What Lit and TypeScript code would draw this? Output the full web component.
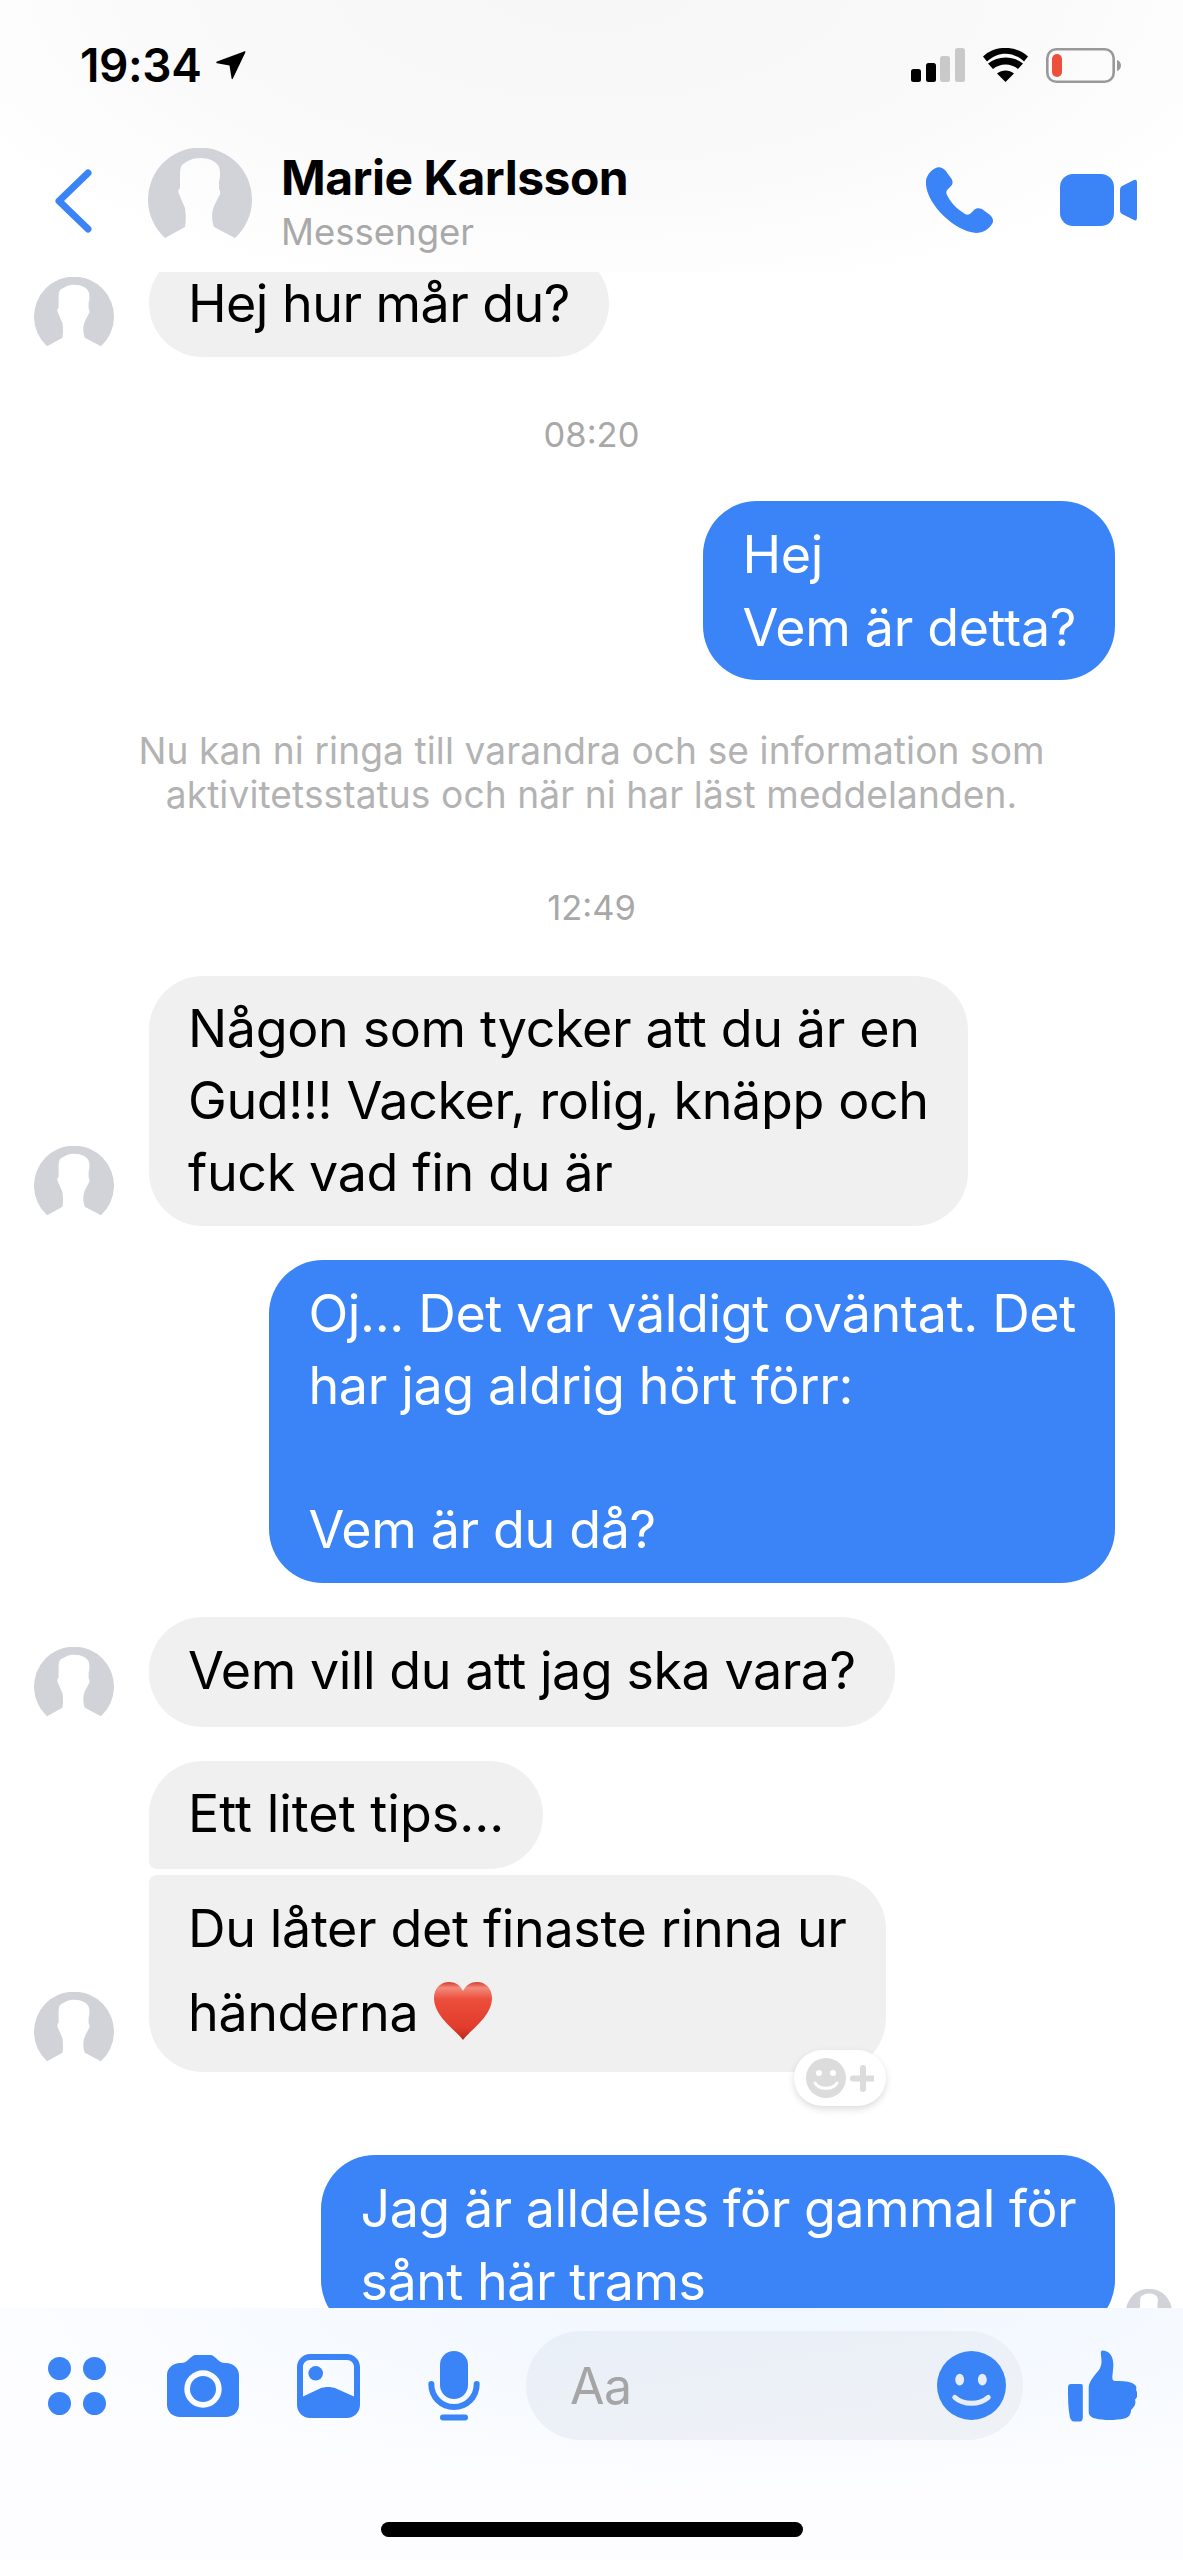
import { LitElement, html, css } from "lit";
import { customElement } from "lit/decorators.js";

const avatar = (cls: string) => html`<svg class=${cls} viewBox="0 0 104 104" aria-hidden="true">
  <path fill="#d2d3d8" d="M17 90A52 52 0 1 1 87 90L66 79C64 73 63 66 66 58L71 48C73 46 72 42 71 41L71 33C72 31 72 28 72 24 72 14 62 10 52 10 44 10 40 13 35 16 32 18 32 24 32 30L32 40C30 42 30 44 31 46L37 60C38 67 38 73 37 79z"/>
</svg>`;

@customElement("app-root")
export class AppRoot extends LitElement {
  static styles = css`
    :host { display: block; width: 1183px; height: 2560px; overflow: hidden; background: #fff; font-family: Inter, "Noto Sans", "Liberation Sans", sans-serif; color: #000; }
    .page { display: flex; flex-direction: column; height: 2560px; }
    .top { height: 272px; flex: none; background: radial-gradient(ellipse 720px 330px at 50% -20px, #f7f7f7 0, #f9f9f9 55%, #fff 100%); display: flex; flex-direction: column; }
    .status { height: 128px; flex: none; padding: 2px 62px 0 80px; display: flex; align-items: center; justify-content: space-between; box-sizing: border-box; }
    .clock { display: flex; align-items: center; gap: 14px; font-size: 46px; font-weight: 600; letter-spacing: -0.4px; }
    .sys { display: flex; align-items: center; gap: 18px; }
    .head { display: flex; align-items: flex-start; padding: 20px 46px 0 55px; }
    .back { width: 37px; height: 64px; margin-top: 21px; flex: none; }
    .hava { width: 104px; height: 104px; margin-left: 56px; flex: none; }
    .names { margin: 4px 0 0 29px; flex: 1; }
    .name { font-size: 48px; font-weight: 700; line-height: 52px; letter-spacing: -0.5px; }
    .sub { font-size: 36.5px; line-height: 44px; color: #a9a9a9; margin-top: 6px; }
    .calls { display: flex; align-items: center; gap: 67px; margin-top: 19px; }
    .chat { flex: 1; min-height: 0; overflow: hidden; display: flex; flex-direction: column; }
    .list { margin-top: -22px; display: flex; flex-direction: column; flex: none; }
    .row { display: flex; align-items: flex-end; position: relative; flex: none; }
    .row.l { padding-left: 34px; gap: 35px; }
    .row.r { justify-content: flex-end; padding-right: 68px; }
    .ava { width: 80px; height: 80px; flex: none; }
    .spacer { width: 80px; flex: none; }
    .b { box-sizing: border-box; padding: 17.5px 39px; border-radius: 54px; font-size: 52px; line-height: 72px; letter-spacing: -0.35px; white-space: pre; position: relative; }
    .in { background: #f0f0f0; color: #000; }
    .out { background: #3b84f8; color: #fff; }
    .b.two { line-height: 73px; padding: 16.500px 39px; }
    .b.three { padding: 17px 39px; }
    .b.vem { padding: 18px 39px 20px; letter-spacing: -0.45px; }
    .b.ett { padding: 17px 39px 19px; letter-spacing: 0; }
    .b.hej { letter-spacing: -0.55px; }
    .b.jag { letter-spacing: -0.5px; }
    .b.tall { line-height: 84px; padding: 12px 39px 17px; }
    .cont1 { border-bottom-left-radius: 8px; }
    .cont2 { border-top-left-radius: 8px; }
    .heart { display: inline-block; width: 60px; height: 60px; vertical-align: -10px; }
    .react { position: absolute; right: 0; bottom: -34px; width: 92px; height: 56px; background: #fff; border-radius: 28px; box-shadow: 0 3px 7px rgba(0,0,0,.14); display: flex; align-items: center; justify-content: center; }
    .time { text-align: center; font-size: 34.5px; line-height: 38px; color: #a8a8a8; }
    .note { text-align: center; font-size: 37.1px; line-height: 44px; color: #b3b3b3; white-space: pre; letter-spacing: .1px; }
    .g6 { margin-top: 6px; } .g34 { margin-top: 34px; } .g47 { margin-top: 47px; } .g49 { margin-top: 49px; }
    .g59 { margin-top: 59px; } .g72 { margin-top: 72px; } .g83 { margin-top: 83px; }
    .g48b { margin-top: 48px; }
    .peek { position: absolute; right: 11px; top: 134px; width: 46px; height: 46px; }
    .composer { height: 252px; flex: none; box-sizing: border-box; padding-top: 23px; background: radial-gradient(ellipse 850px 190px at 790px 0, #f1f7ff 0, #f6faff 55%, #fdfdff 100%); display: flex; flex-direction: column; }
    .tools { height: 109px; flex: none; display: flex; align-items: center; padding-left: 48px; }
    .cam { margin-left: 61px; } .img { margin-left: 58px; } .mic { margin-left: 68px; }
    .pill { margin-left: 46px; width: 497px; height: 109px; flex: none; border-radius: 55px; background: linear-gradient(170deg, #e9eff8, #eff2f6); display: flex; align-items: center; justify-content: space-between; box-sizing: border-box; padding: 0 17px 0 44px; }
    .aa { font-size: 50px; color: #a5a5a5; letter-spacing: -0.5px; }
    .thumb { margin-left: 45px; }
    .homebar { align-self: center; margin-top: 82px; width: 422px; height: 15px; border-radius: 8px; background: #000; flex: none; }
    .ic { display: block; flex: none; }
  `;

  render() {
    return html`<div class="page">
      <div class="top">
        <div class="status">
          <div class="clock">19:34
            <svg class="ic" width="31" height="30" viewBox="0 0 31 30"><path d="M29 1.500 2 11.500c-1 .500-1 1.500 0 1.800L14.500 15.500 16.500 28c.200 1.500 1 1.500 1.500.300L30.300 2.500C30.700 1.500 30 1 29 1.500z" fill="#000"/></svg>
          </div>
          <div class="sys">
            <svg class="ic" width="54" height="34" viewBox="0 0 54 34">
              <rect x="0" y="21" width="10" height="13" rx="2.500" fill="#000"/>
              <rect x="15" y="15" width="10" height="19" rx="2.500" fill="#000"/>
              <rect x="29" y="8" width="10" height="26" rx="2.500" fill="#c9c9c9"/>
              <rect x="44" y="0" width="10" height="34" rx="2.500" fill="#c9c9c9"/>
            </svg>
            <svg class="ic" width="45" height="34" viewBox="0 0 45 34">
              <path d="M22.500 34 14 25.500c5-4 12-4 17 0z" fill="#000"/>
              <path d="M10 21 5 15.500c10-8 25-8 35 0L35 21C28 15 17 15 10 21z" fill="#000"/>
              <path d="M4 13.500 0 8.500C12-3 33-3 45 8.500L41 13.500C30 3 15 3 4 13.500z" fill="#000"/>
            </svg>
            <svg class="ic" width="75" height="35" viewBox="0 0 75 35">
              <rect x="1.300" y="1.300" width="66.400" height="32.400" rx="9" fill="none" stroke="#999" stroke-width="2.600"/>
              <rect x="6" y="6" width="10" height="23" rx="5" fill="#ee4f3c"/>
              <path d="M71 12c2.500.800 4 3 4 5.500s-1.500 4.700-4 5.500z" fill="#999"/>
            </svg>
          </div>
        </div>
        <div class="head">
          <svg class="back" viewBox="0 0 37 64"><path d="M33 4 4 32l29 28" fill="none" stroke="#3b84f8" stroke-width="7" stroke-linecap="round" stroke-linejoin="round"/></svg>
          ${avatar("hava")}
          <div class="names"><div class="name">Marie Karlsson</div><div class="sub">Messenger</div></div>
          <div class="calls">
            <svg class="ic" width="67" height="66" viewBox="0 0 67 66"><path fill="#3b84f8" d="M8 2c4-3 8-2 11 1l6 8c2 3 2 6 0 8l-3 3c-2 2-2 4-1 6 4 8 10 14 18 19 2 1 4 1 6-1l3-3c2-2 5-2 8-1l8 6c3 3 4 6 2 9-3 5-9 9-16 9C28 64 2 38 0 18-1 11 3 5 8 2z"/></svg>
            <svg class="ic" width="77" height="52" viewBox="0 0 77 52"><rect x="0" y="0" width="54" height="52" rx="13" fill="#3b84f8"/><path fill="#3b84f8" d="M60 16c0-2 .500-3 2-4l12-6c2-1 3 0 3 3v34c0 3-1 4-3 3l-12-6c-1.500-1-2-2-2-4z"/></svg>
          </div>
        </div>
      </div>
      <div class="chat">
        <div class="list">
          <div class="row l">${avatar("ava")}<div class="b in hej">Hej hur mår du?</div></div>
          <div class="time g59">08:20</div>
          <div class="row r g47"><div class="b out two">${"Hej\nVem är detta?"}</div></div>
          <div class="note g49">${"Nu kan ni ringa till varandra och se information som\naktivitetsstatus och när ni har läst meddelanden."}</div>
          <div class="time g72">12:49</div>
          <div class="row l g49">${avatar("ava")}<div class="b in three">${"Någon som tycker att du är en\nGud!!! Vacker, rolig, knäpp och\nfuck vad fin du är"}</div></div>
          <div class="row r g34"><div class="b out">${"Oj... Det var väldigt oväntat. Det\nhar jag aldrig hört förr:\n\nVem är du då?"}</div></div>
          <div class="row l g34">${avatar("ava")}<div class="b in vem">Vem vill du att jag ska vara?</div></div>
          <div class="row l g34"><div class="spacer"></div><div class="b in cont1 ett">Ett litet tips...</div></div>
          <div class="row l g6">${avatar("ava")}<div class="b in cont2 tall">${"Du låter det finaste rinna ur\nhänderna "}<svg class="heart" viewBox="0 0 60 60"><defs><linearGradient id="hg" x1="0" y1="0" x2="0" y2="1"><stop offset="0" stop-color="#d8392a"/><stop offset=".1" stop-color="#f28a7a"/><stop offset=".3" stop-color="#ec4e3b"/><stop offset=".8" stop-color="#e03c2b"/><stop offset="1" stop-color="#b92618"/></linearGradient></defs><path fill="url(#hg)" d="M30 59C24 50 1 36 1 17 1 7 8 1 16 1c6 0 11 3 14 9C33 4 38 1 44 1c8 0 15 6 15 16 0 19-23 33-29 42z"/></svg><div class="react"><svg class="ic" width="68" height="40" viewBox="0 0 68 40"><circle cx="20" cy="20" r="20" fill="#dcdcdc"/><circle cx="13" cy="15" r="3" fill="#fff"/><circle cx="27" cy="15" r="3" fill="#fff"/><path d="M9 25c4 7 18 7 22 0" stroke="#fff" stroke-width="3" fill="none" stroke-linecap="round"/><path d="M57 10v21M47 20.500h21" stroke="#dcdcdc" stroke-width="6" stroke-linecap="round"/></svg></div></div></div>
          <div class="row r g83"><div class="b out two jag">${"Jag är alldeles för gammal för\nsånt här trams"}</div>${avatar("peek")}</div>
        </div>
      </div>
      <div class="composer">
        <div class="tools">
          <svg class="ic" width="58" height="58" viewBox="0 0 58 58"><g fill="#3b84f8"><circle cx="11.500" cy="11.500" r="11.500"/><circle cx="46.500" cy="11.500" r="11.500"/><circle cx="11.500" cy="46.500" r="11.500"/><circle cx="46.500" cy="46.500" r="11.500"/></g></svg>
          <svg class="ic cam" width="72" height="64" viewBox="0 0 72 64"><path fill="#3b84f8" fill-rule="evenodd" d="M13 9h1c3 0 5-1 7-3 3-3 5-5 8-5h14c3 0 5 2 8 5 2 2 4 3 7 3h1c7 0 13 5 13 12v30c0 7-6 12-13 12H13C6 63 0 58 0 51V21C0 14 6 9 13 9zM36 16.300a18.700 18.700 0 1 0 0 37.400 18.700 18.700 0 0 0 0-37.400z"/><circle cx="36" cy="35" r="13" fill="#3b84f8"/></svg>
          <svg class="ic img" width="63" height="64" viewBox="0 0 63 64"><path fill="#3b84f8" fill-rule="evenodd" d="M13 0h37c7 0 13 6 13 13v38c0 7-6 13-13 13H13C6 64 0 58 0 51V13C0 6 6 0 13 0zm0 6c-4 0-7 3-7 7v29.500l17-8c5-2 11-2 16 0l18 8V13c0-4-3-7-7-7z"/><circle cx="18.700" cy="19.300" r="7.300" fill="#3b84f8"/></svg>
          <svg class="ic mic" width="52" height="70" viewBox="0 0 52 70"><rect x="12" y="0" width="28" height="48" rx="14" fill="#3b84f8"/><path d="M3.300 33c0 13 10 23 22.700 23s22.700-10 22.700-23" fill="none" stroke="#3b84f8" stroke-width="6" stroke-linecap="round"/><rect x="12" y="63.500" width="28" height="6" rx="3" fill="#3b84f8"/></svg>
          <div class="pill">
            <span class="aa">Aa</span>
            <svg class="ic" width="69" height="69" viewBox="0 0 70 70"><circle cx="35" cy="35" r="35" fill="#3b84f8"/><ellipse cx="23" cy="29" rx="4.500" ry="6" fill="#e9eef6"/><ellipse cx="46" cy="29" rx="4.500" ry="6" fill="#e9eef6"/><path d="M18 47c9 8 25 8 34 0" fill="none" stroke="#e9eef6" stroke-width="5" stroke-linecap="round"/></svg>
          </div>
          <svg class="ic thumb" width="69" height="72" viewBox="0 0 70 72"><g fill="#3b84f8"><path d="M0 38c0-3 1-4 3-4h10c2 0 2 1 2 3v31c0 3-1 4-3 4H6c-2 0-3-1-4-4-2-9-2-20-2-30z"/><path d="M35 0c6 0 11 5 11 14 0 5-1 11-1 14 0 2 1 3 3 3 5 0 12 0 17 2 4 2 5 4 4 7 2 3 2 7-1 10 1 3 0 6-2 8-1 1-1 2-2 2 0 5-3 8-7 9-9 2-21 2-29 0-4-1-7-3-7-7V38c0-5 3-9 6-13 4-4 7-8 7-14C34 6 32 0 35 0z"/></g></svg>
        </div>
        <div class="homebar"></div>
      </div>
    </div>`;
  }
}
